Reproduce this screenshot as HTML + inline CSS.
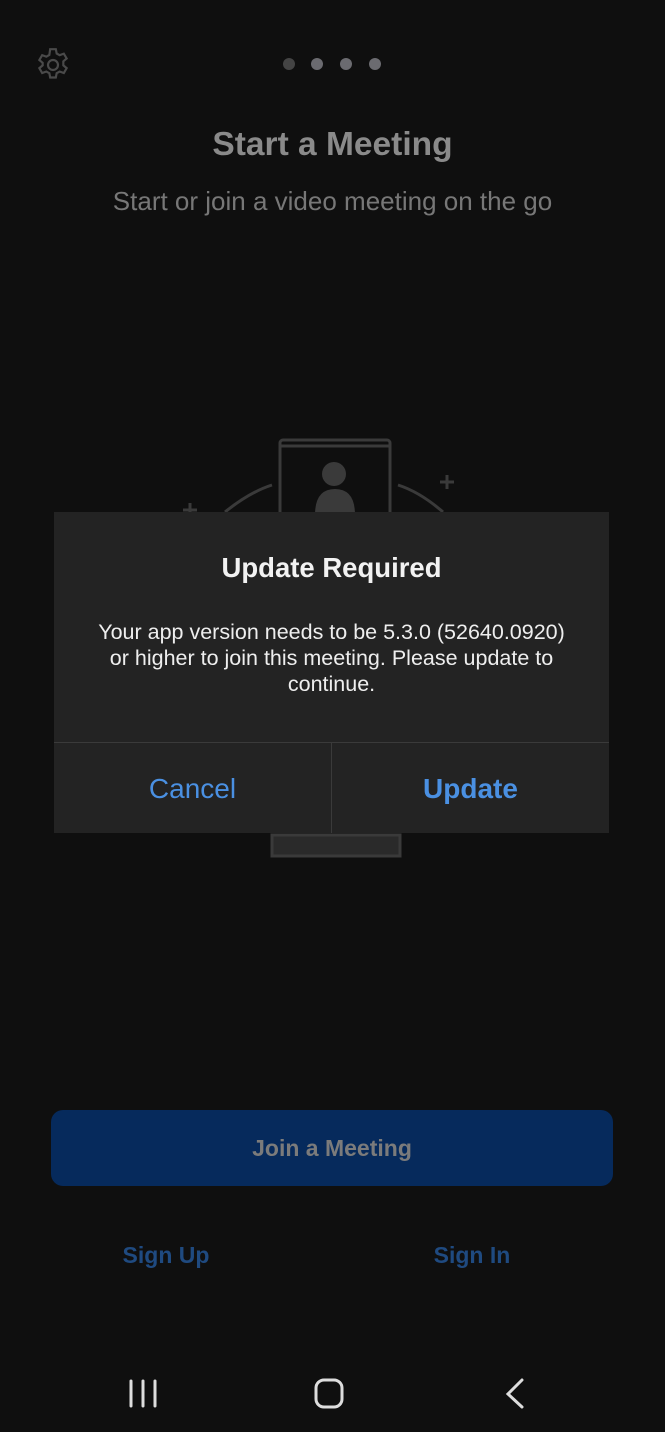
<!DOCTYPE html>
<html><head><meta charset="utf-8"><style>
body{margin:0;width:665px;height:1432px;background:#0f0f0f;position:relative;overflow:hidden;font-family:"Liberation Sans",sans-serif}
.a{position:absolute}
.dot{position:absolute;top:58px;width:12px;height:12px;border-radius:50%;background:#6b6b70}
</style></head><body>
<svg class="a" style="left:33px;top:45px" width="40" height="40" viewBox="0 0 24 24" fill="none" stroke="#4a4a4a" stroke-width="1.3"><path d="M10.3 2.5h3.4l.5 2.6 1.8 1 2.5-.9 1.7 2.9-2 1.7v2.4l2 1.7-1.7 2.9-2.5-.9-1.8 1-.5 2.6h-3.4l-.5-2.6-1.8-1-2.5.9-1.7-2.9 2-1.7V10.7l-2-1.7 1.7-2.9 2.5.9 1.8-1z"/><circle cx="12" cy="12" r="3"/></svg>
<div class="dot" style="left:283px;background:#444"></div>
<div class="dot" style="left:311px"></div>
<div class="dot" style="left:340px"></div>
<div class="dot" style="left:369px"></div>
<div class="a" style="left:0;width:665px;top:126px;text-align:center;color:#8a8a8a;font-size:33.5px;font-weight:bold">Start a Meeting</div>
<div class="a" style="left:0;width:665px;top:186px;text-align:center;color:#777;font-size:26px">Start or join a video meeting on the go</div>
<svg class="a" style="left:150px;top:420px" width="350" height="450" viewBox="0 0 350 450" fill="none" stroke="#3a3a3a" stroke-width="3">
<rect x="130" y="20" width="110" height="80" rx="3"/><line x1="130" y1="26" x2="240" y2="26"/>
<circle cx="184" cy="54" r="12" fill="#3a3a3a" stroke="none"/><path d="M165 95q0-26 20-26t20 26z" fill="#3a3a3a" stroke="none"/>
<path d="M75 92q25-20 47-27M248 65q22 7 45 27"/>
<path d="M290 62h14M297 55v14M33 90h14M40 83v14"/>
<path d="M122 415h128v21h-128z" fill="#2a2a2a"/>
</svg>
<div class="a" style="left:54px;top:512px;width:555px;height:321px;background:#232323">
<div class="a" style="left:0;width:555px;top:40px;text-align:center;color:#f2f2f2;font-size:27.5px;font-weight:bold">Update Required</div>
<div class="a" style="left:37px;width:481px;top:107px;text-align:center;color:#eee;font-size:21.5px;line-height:26px">Your app version needs to be 5.3.0 (52640.0920) or higher to join this meeting. Please update to continue.</div>
<div class="a" style="left:0;width:555px;top:230px;border-top:1px solid #3a3a3a"></div>
<div class="a" style="left:277px;top:231px;height:90px;border-left:1px solid #3a3a3a"></div>
<div class="a" style="left:0;width:277px;top:261px;text-align:center;color:#4a90e2;font-size:28px">Cancel</div>
<div class="a" style="left:278px;width:277px;top:261px;text-align:center;color:#4a90e2;font-size:28px;font-weight:bold">Update</div>
</div>
<div class="a" style="left:51px;top:1110px;width:562px;height:76px;border-radius:12px;background:#062a5c;color:#7b7b7b;font-size:23px;font-weight:bold;text-align:center;line-height:76px">Join a Meeting</div>
<div class="a" style="left:66px;width:200px;top:1242px;text-align:center;color:#1f4a80;font-size:23px;font-weight:bold">Sign Up</div>
<div class="a" style="left:372px;width:200px;top:1242px;text-align:center;color:#1f4a80;font-size:23px;font-weight:bold">Sign In</div>
<svg class="a" style="left:0;top:1370px" width="665" height="50" fill="none" stroke="#ddd" stroke-width="3" stroke-linecap="round">
<path d="M131 11v25M143 11v25M155 11v25"/><rect x="316" y="10" width="26" height="27" rx="8"/><path d="M522 10l-14 14 14 13"/>
</svg>
</body></html>
